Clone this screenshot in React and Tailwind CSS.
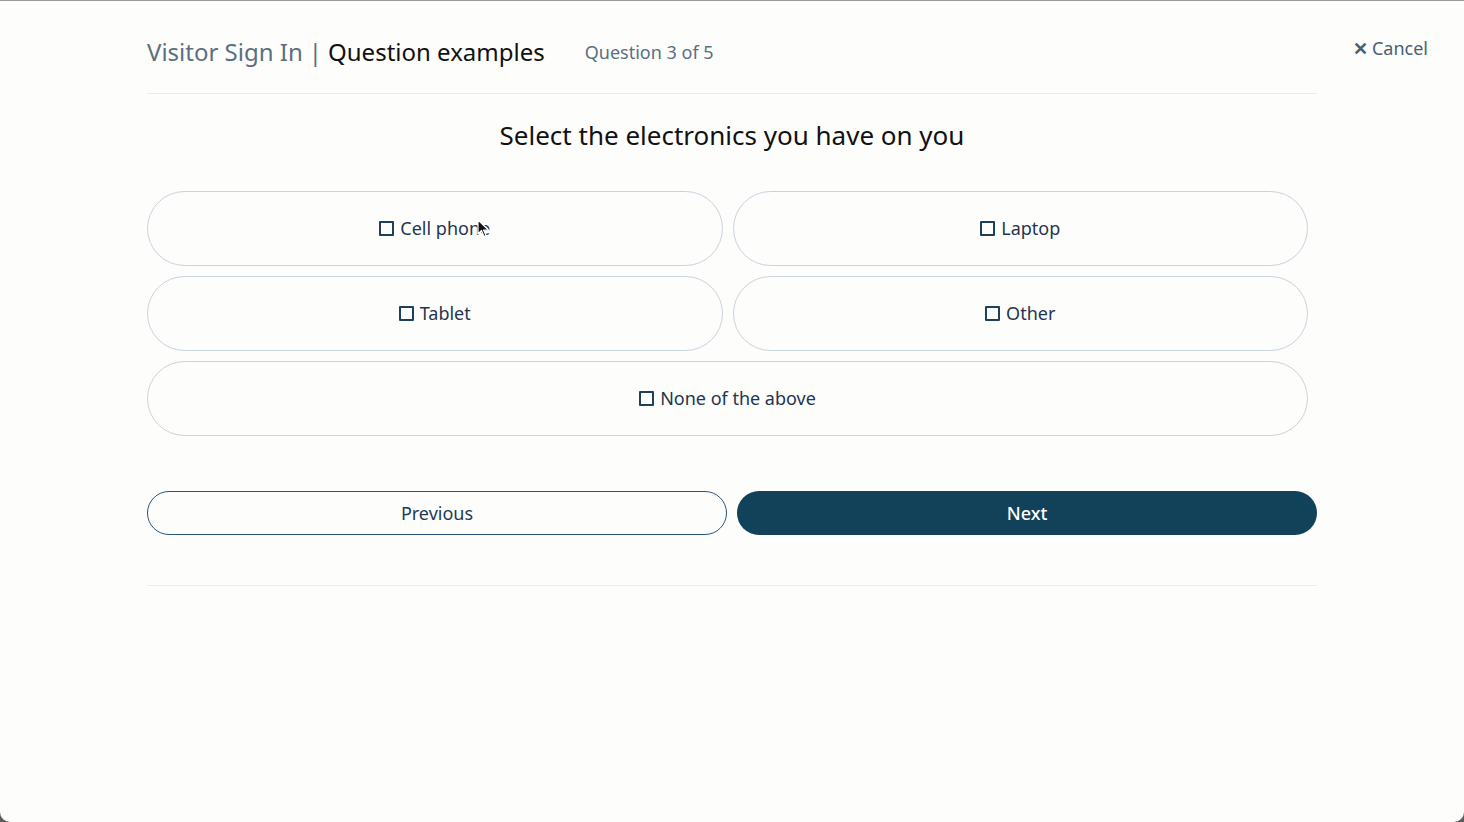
import { useState } from 'react';

const OPTIONS = [
  { id: 'cell', label: 'Cell phone' },
  { id: 'laptop', label: 'Laptop' },
  { id: 'tablet', label: 'Tablet' },
  { id: 'other', label: 'Other' },
  { id: 'none', label: 'None of the above', wide: true },
];

function Box() {
  return <span className="inline-block h-[15px] w-[15px] border-2 border-[#1f3f5e] rounded-[1px]" />;
}

function Cursor() {
  return (
    <svg className="absolute left-[477px] top-[218px] pointer-events-none" width="14" height="20" viewBox="0 0 14 20">
      <path d="M1 1 L1 15 L4.5 11.5 L7 17.5 L9 16.6 L6.6 11 L11.5 11 Z" fill="#111" stroke="#fff" strokeWidth="1.2" strokeLinejoin="round" />
    </svg>
  );
}

export default function App() {
  const [picked, setPicked] = useState({});

  return (
    <div className="bg-[#5c5c5c] h-[822px]" style={{ fontFamily: '"Noto Sans", "Open Sans", sans-serif' }}>
      <div className="relative h-[822px] bg-[#fdfdfc] border-t border-[#9a9a9a] rounded-b-[10px] grid grid-cols-[147px_1170px_147px] content-start">
        <div />
        <div>
          <header className="flex items-center pt-[35px] pb-[25px] border-b border-[#e9ecef]">
            <div className="text-[24px] leading-[32px]">
              <span className="text-[#5b6f82]">Visitor Sign In</span>
              <span className="text-[#5b6f82] mx-[6px]">|</span>
              <span className="text-[#111]">Question examples</span>
            </div>
            <div className="ml-[40px] text-[18px] leading-[32px] text-[#5b6f82]">Question 3 of 5</div>
          </header>

          <h1 className="mt-[24px] text-center text-[26px] leading-[34px] text-[#111]">
            Select the electronics you have on you
          </h1>

          <div className="mt-[39px] w-[1161px] grid grid-cols-2 gap-[10px]">
            {OPTIONS.map((o) => (
              <button
                key={o.id}
                onClick={() => setPicked((p) => ({ ...p, [o.id]: !p[o.id] }))}
                className={`h-[75px] rounded-full border border-[#c9d3dd] bg-[#fdfdfc] flex items-center justify-center gap-[6px] text-[18px] text-[#1f3550] ${o.wide ? 'col-span-2' : ''}`}
              >
                <Box />
                <span>{o.label}</span>
              </button>
            ))}
          </div>

          <div className="mt-[55px] grid grid-cols-2 gap-[10px] pb-[50px] border-b border-[#eceef0]">
            <button className="h-[44px] rounded-full border border-[#2d5675] text-[18px] text-[#1e3a52]">Previous</button>
            <button className="h-[44px] rounded-full bg-[#12425a] text-[18px] font-medium text-white">Next</button>
          </div>
        </div>
        <div className="pt-[35px] pr-[36px] flex justify-end items-start">
          <button className="flex items-center gap-[4px] text-[18px] leading-[24px] text-[#4b6075]">
            <span className="font-black text-[18px]">✕</span>
            <span>Cancel</span>
          </button>
        </div>
        <Cursor />
      </div>
    </div>
  );
}
